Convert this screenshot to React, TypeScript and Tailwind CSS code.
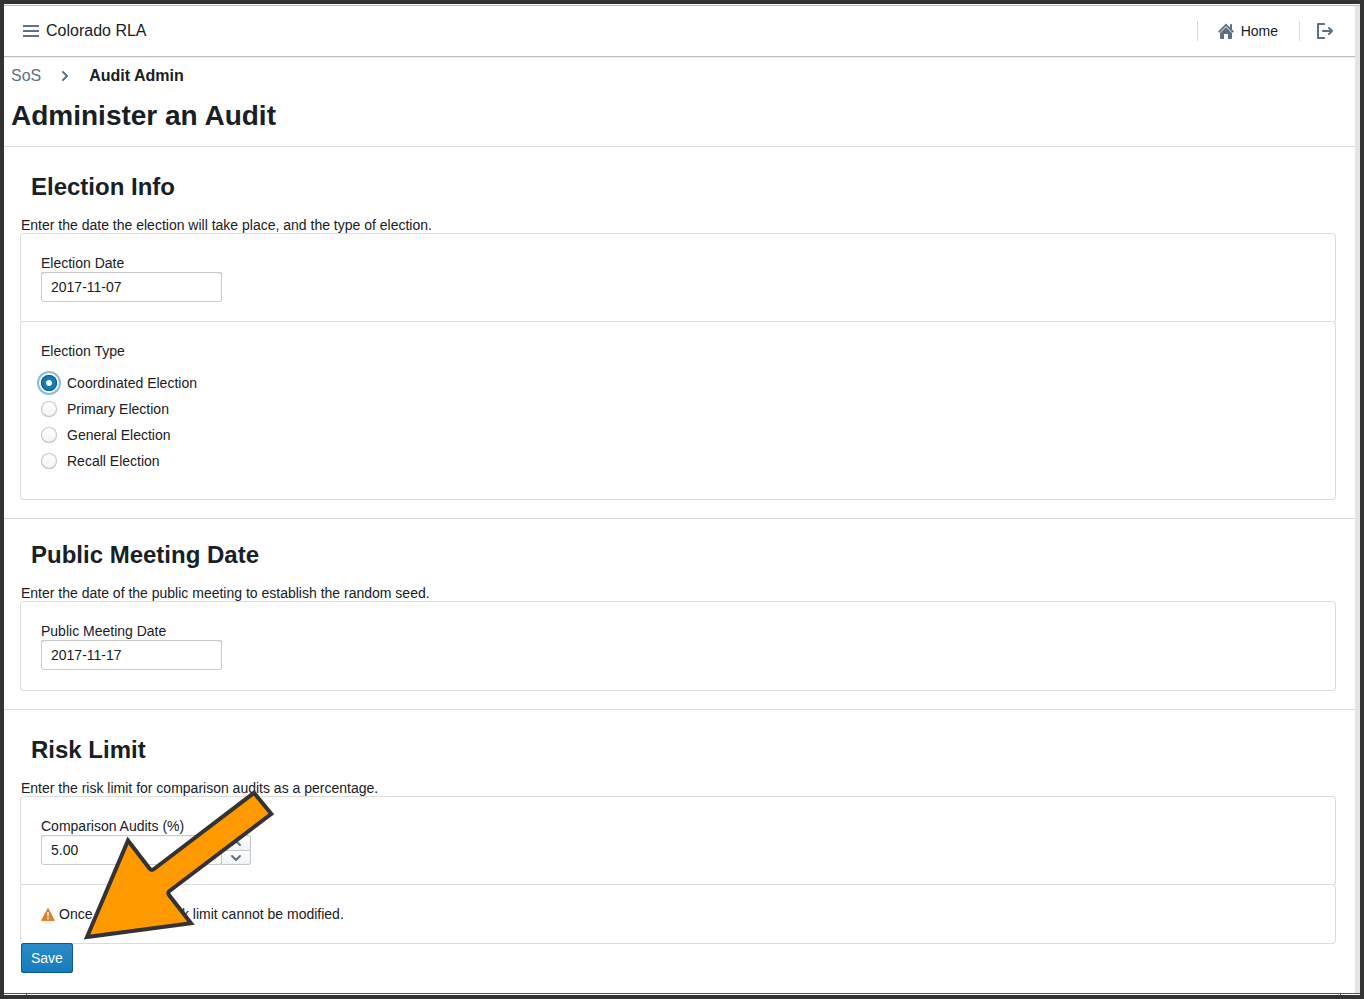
import React, { useState } from "react";

function MenuIcon() {
  return (
    <svg className="h-4 w-4 fill-[#5c7080]" viewBox="0 0 16 16" aria-hidden="true">
      <path d="M0 2h16v2H0zM0 7h16v2H0zM0 12h16v2H0z" />
    </svg>
  );
}

function HomeIcon() {
  return (
    <svg className="h-4 w-4 fill-[#5c7080]" viewBox="0 0 16 16" aria-hidden="true">
      <path d="M2 10v5c0 .55.45 1 1 1h3v-5h4v5h3c.55 0 1-.45 1-1v-5L8 4l-6 6zm13.71-1.71L14 6.59V2c0-.55-.45-1-1-1s-1 .45-1 1v2.59L8.71 1.29l-.71-.7-.71.7-7 7a1 1 0 001.42 1.1L8 3l6.29 6.39a1 1 0 001.42-1.1z" />
    </svg>
  );
}

function LogOutIcon() {
  return (
    <svg className="h-4 w-4 fill-[#5c7080]" viewBox="0 0 16 16" aria-hidden="true">
      <path d="M7 14H2V2h5c.55 0 1-.45 1-1s-.45-1-1-1H1C.45 0 0 .45 0 1v14c0 .55.45 1 1 1h6c.55 0 1-.45 1-1s-.45-1-1-1zm8.71-6.71l-3-3a1.003 1.003 0 00-1.42 1.42L12.59 7H6c-.55 0-1 .45-1 1s.45 1 1 1h6.59l-1.3 1.29a1.003 1.003 0 001.42 1.42l3-3c.18-.18.29-.43.29-.71s-.11-.53-.29-.71z" />
    </svg>
  );
}

function Chevron({ className }: { className: string }) {
  return (
    <svg className={className} viewBox="0 0 16 16" fill="none" aria-hidden="true">
      <path d="M6 4l4 4-4 4" stroke="#5c7080" strokeWidth="2" strokeLinecap="round" strokeLinejoin="round" />
    </svg>
  );
}

function WarningIcon() {
  return (
    <svg className="h-3.5 w-3.5" viewBox="0 0 14 14" aria-hidden="true">
      <path d="M7 1.6L13.4 13.4H.6z" fill="#d9822b" stroke="#d9822b" strokeWidth="1" strokeLinejoin="round" />
      <path d="M6.2 5h1.6v4.4H6.2zM6.2 10.6h1.6v1.6H6.2z" fill="#fbe6cf" />
    </svg>
  );
}

function ArrowMark() {
  return (
    <svg
      className="pointer-events-none absolute left-[76px] top-[74px] h-[164px] w-[200px]"
      viewBox="80 784 200 164"
      aria-hidden="true"
    >
      <path
        d="M254 792.8L271.3 813.8L169.5 891Q167.5 892.8 169 895L191 923.2L87 937L128 840.5L149.5 868.5Q151.5 871 154 869Z"
        fill="#ff9900"
        stroke="#333"
        strokeWidth="4"
      />
    </svg>
  );
}

function Section({
  title,
  intro,
  tight,
  last,
  children,
}: {
  title: string;
  intro: string;
  tight?: boolean;
  last?: boolean;
  children: React.ReactNode;
}) {
  return (
    <section
      className={`relative pl-[17px] pr-5 ${tight ? "pt-[22px]" : "pt-[26px]"} ${
        last ? "pb-5" : "border-b border-[#d9d9d9] pb-[19px]"
      }`}
    >
      <h3 className="mb-[15px] ml-2.5 text-2xl leading-7 font-bold">{title}</h3>
      <p>{intro}</p>
      {children}
    </section>
  );
}

function Card({ children }: { children: React.ReactNode }) {
  return <div className="rounded-[3px] bg-white p-5 shadow-[0_0_0_1px_#dcdcdc]">{children}</div>;
}

const fieldClass =
  "block h-[30px] w-[181px] rounded-[3px] bg-white px-2.5 text-sm text-[#182026] outline-none shadow-[inset_0_0_0_1px_#c9cbcd,inset_0_1px_1px_#a9abad]";

function DateField({ id, label, value }: { id: string; label: string; value: string }) {
  return (
    <>
      <label htmlFor={id} className="block">
        {label}
      </label>
      <input id={id} type="text" defaultValue={value} className={fieldClass} />
    </>
  );
}

const types = ["Coordinated Election", "Primary Election", "General Election", "Recall Election"];

function TypePicker() {
  const [picked, setPicked] = useState(types[0]);
  return (
    <fieldset>
      <legend className="mb-[15px]">Election Type</legend>
      {types.map((type) => (
        <label key={type} className="mb-2.5 flex h-4 items-center gap-2.5">
          <input
            type="radio"
            name="election-type"
            checked={picked === type}
            onChange={() => setPicked(type)}
            className="h-4 w-4 appearance-none rounded-full bg-linear-to-b from-white to-[#f1f3f5] shadow-[inset_0_0_0_1px_#c4c7ca,inset_0_-1px_1px_#c4c7ca] checked:bg-[radial-gradient(circle,#fff_0,#fff_2.5px,#137cbd_3.5px)] checked:shadow-[inset_0_0_0_1px_#0f5a89,0_0_0_2px_#fff,0_0_0_4px_#89bdde]"
          />
          {type}
        </label>
      ))}
    </fieldset>
  );
}

function RiskField() {
  const [value, setValue] = useState("5.00");
  const step = (by: number) => setValue((Number(value) + by).toFixed(2));
  const stepClass =
    "flex w-[30px] items-center justify-center bg-linear-to-b from-white to-[#eff2f4] shadow-[inset_0_0_0_1px_#c4c7ca]";
  return (
    <>
      <label htmlFor="risk" className="block">
        Comparison Audits (%)
      </label>
      <div className="flex">
        <input id="risk" type="text" value={value} onChange={(e) => setValue(e.target.value)} className={fieldClass} />
        <div className="-ml-px flex flex-col">
          <button type="button" aria-label="Increase" onClick={() => step(1)} className={`${stepClass} h-4 rounded-tr-[3px]`}>
            <Chevron className="h-4 w-4 -rotate-90" />
          </button>
          <button type="button" aria-label="Decrease" onClick={() => step(-1)} className={`${stepClass} -mt-px h-[15px] rounded-br-[3px]`}>
            <Chevron className="h-4 w-4 rotate-90" />
          </button>
        </div>
      </div>
    </>
  );
}

export default function App() {
  return (
    <div className="min-h-screen border-4 border-[#333] bg-white pt-px font-['Liberation_Sans',Arial,sans-serif] text-sm leading-[18px] text-[#182026]">
      <div className="border-t border-b border-t-[#bbb] border-b-[#555]">
        <div className="border-r-[5px] border-[#e4e4e4]">
          <header className="flex h-[51px] items-center justify-between border-b border-[#bdbdbd] pl-[19px] pr-[22px] shadow-[0_1px_0_#f0f0f0]">
            <div className="flex items-center gap-[7px]">
              <button type="button" aria-label="Menu">
                <MenuIcon />
              </button>
              <span className="text-base">Colorado RLA</span>
            </div>
            <nav className="flex h-5 items-center">
              <a href="#home" className="flex h-5 items-center gap-[7px] border-l border-[#d9d9d9] pl-5 pr-[21px]">
                <HomeIcon />
                Home
              </a>
              <a href="#logout" aria-label="Log out" className="flex h-5 items-center border-l border-[#d9d9d9] pl-[17px]">
                <LogOutIcon />
              </a>
            </nav>
          </header>

          <div className="border-b border-[#d9d9d9] pb-[14px] pl-[7px] pt-[10px]">
            <nav aria-label="Breadcrumb" className="flex items-center text-base leading-[18px]">
              <a href="#sos" className="text-[#5c7080]">
                SoS
              </a>
              <Chevron className="mx-4 h-4 w-4" />
              <span className="font-bold">Audit Admin</span>
            </nav>
            <h1 className="mt-[15px] text-[28px] leading-8 font-bold">Administer an Audit</h1>
          </div>

          <main>
            <Section title="Election Info" intro="Enter the date the election will take place, and the type of election.">
              <Card>
                <DateField id="election-date" label="Election Date" value="2017-11-07" />
              </Card>
              <Card>
                <TypePicker />
              </Card>
            </Section>

            <Section tight title="Public Meeting Date" intro="Enter the date of the public meeting to establish the random seed.">
              <Card>
                <DateField id="meeting-date" label="Public Meeting Date" value="2017-11-17" />
              </Card>
            </Section>

            <Section last title="Risk Limit" intro="Enter the risk limit for comparison audits as a percentage.">
              <Card>
                <RiskField />
              </Card>
              <Card>
                <p className="flex items-center gap-1">
                  <WarningIcon />
                  Once saved, this risk limit cannot be modified.
                </p>
              </Card>
              <button
                type="button"
                className="relative block h-[30px] rounded-[3px] bg-linear-to-b from-[#2b8cc8] to-[#137cbd] px-2.5 text-white shadow-[inset_0_0_0_1px_#0f5a89]"
              >
                Save
              </button>
              <ArrowMark />
            </Section>
          </main>
        </div>
      </div>
      <div className="flex h-px justify-between pl-[22px] pr-[19px]">
        <span className="w-px bg-[#555]" />
        <span className="w-px bg-[#555]" />
      </div>
    </div>
  );
}
